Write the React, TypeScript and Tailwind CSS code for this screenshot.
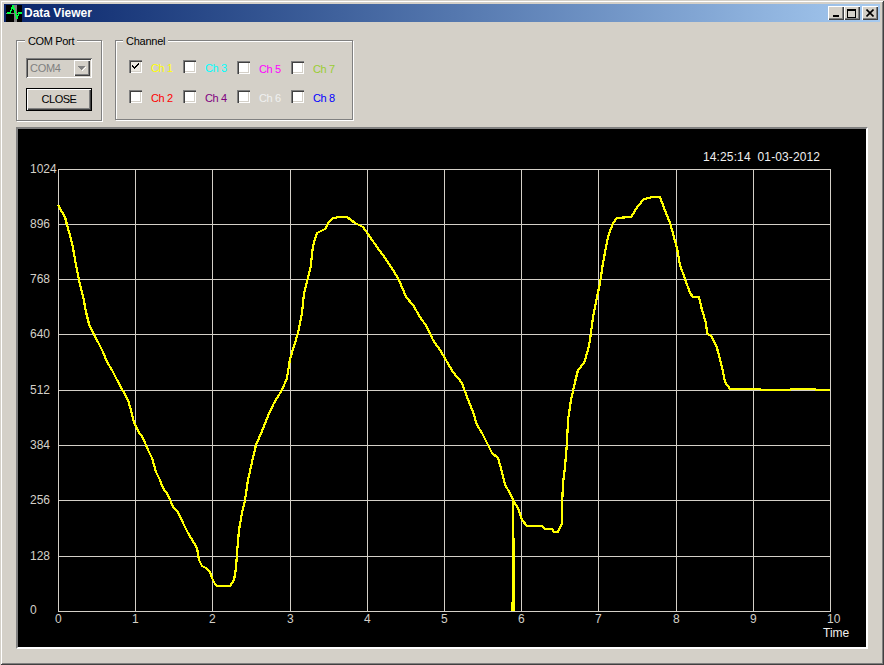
import React from "react";

const curve: [number, number][] = [
  [58,205],[62,212],[65,217],[67,225],[70,235],[73,248],[76,265],[79,280],[83,296],[86,312],[89,324],[93,333],[98,342],[103,352],[107,362],[112,370],[117,380],[123,391],[128,400],[131,410],[134,422],[138,431],[143,438],[148,450],[152,458],[156,472],[160,480],[163,488],[168,495],[173,507],[178,512],[183,523],[188,533],[197,548],[199,560],[202,566],[206,568],[210,572],[212,578],[215,584],[217,586],[230,586],[234,580],[236,568],[237,553],[239,530],[242,513],[245,500],[248,480],[252,462],[256,445],[262,431],[268,416],[274,403],[282,390],[287,378],[290,359],[295,343],[298,333],[302,313],[304,293],[308,278],[311,265],[312,253],[314,242],[317,233],[325,229],[329,222],[333,218],[340,217],[347,217],[355,223],[363,227],[370,237],[377,247],[385,258],[393,270],[399,280],[406,297],[413,305],[420,317],[427,327],[433,340],[440,350],[453,372],[462,383],[467,397],[473,412],[477,425],[482,433],[487,443],[492,453],[498,458],[502,472],[505,485],[510,493],[513,500],[518,508],[522,520],[527,526],[542,526],[545,529],[552,529],[554,532],[558,532],[562,523],[562,507],[563,483],[565,467],[567,443],[568,420],[571,400],[575,382],[578,370],[584,363],[588,350],[590,340],[593,317],[597,297],[600,283],[603,263],[606,247],[608,237],[613,223],[617,218],[631,217],[638,206],[644,199],[653,197],[660,197],[664,208],[670,223],[677,248],[680,265],[690,293],[693,297],[699,297],[702,310],[706,323],[707,333],[712,337],[717,348],[722,367],[725,382],[730,389],[737,389],[760,389],[761,390],[790,390],[791,389],[815,389],[816,390],[830,390],
];

const xs = Array.from({ length: 11 }, (_, i) => Math.round(58 + i * 77.2));
const ys = [169, 224, 279, 334, 390, 445, 500, 556, 611];
const yLabels = ["1024", "896", "768", "640", "512", "384", "256", "128", "0"];

const channels = [
  { name: "Ch 1", color: "text-[#ffff00]", checked: true, cls: "" },
  { name: "Ch 2", color: "text-[#ff0000]", checked: false, cls: "" },
  { name: "Ch 3", color: "text-[#00ffff]", checked: false, cls: "" },
  { name: "Ch 4", color: "text-[#800080]", checked: false, cls: "" },
  { name: "Ch 5", color: "text-[#ff00ff]", checked: false, cls: "mt-px" },
  { name: "Ch 6", color: "text-[#f0f0f0]", checked: false, cls: "" },
  { name: "Ch 7", color: "text-[#9acd32]", checked: false, cls: "mt-px" },
  { name: "Ch 8", color: "text-[#0000ff]", checked: false, cls: "" },
];

function WinButton({ children, cls }: { children: React.ReactNode; cls: string }) {
  return (
    <div className={`w-[16px] h-[14px] bg-[#d4d0c8] shadow-[inset_1px_1px_0_#ffffff,inset_-1px_-1px_0_#404040,inset_-2px_-2px_0_#808080] flex items-center justify-center ${cls}`}>
      {children}
    </div>
  );
}

function Checkbox({ checked }: { checked: boolean }) {
  return (
    <div className={`w-[13px] h-[13px] shrink-0 ${checked ? "bg-[#ece9e2]" : "bg-white"} shadow-[inset_1px_1px_0_#808080,inset_2px_2px_0_#404040,inset_-1px_-1px_0_#ffffff,inset_-2px_-2px_0_#d4d0c8] flex items-center justify-center`}>
      {checked && (
        <svg width="9" height="9" viewBox="0 0 9 9" shapeRendering="crispEdges">
          <path d="M1 3h1v1h1v1h1V4h1V3h1V2h1V1h1v2H7v1H6v1H5v1H4v1H3V6H2V5H1z" fill="#000" />
        </svg>
      )}
    </div>
  );
}

export default function App() {
  const pts = curve.map(([x, y]) => `${x},${y}`).join(" ");
  return (
    <div className="w-[884px] h-[665px] overflow-hidden bg-[#d4d0c8] p-[4px] shadow-[inset_1px_1px_0_#d4d0c8,inset_-1px_-1px_0_#404040,inset_2px_2px_0_#ffffff,inset_-2px_-2px_0_#808080] font-['Liberation_Sans',Arial,sans-serif] text-[11px] text-black">
      <div className="h-[18px] flex items-center bg-gradient-to-r from-[#0a246a] to-[#a6caf0] pl-[2px] pr-[2px]">
        <svg width="16" height="17" viewBox="0 0 16 17" shapeRendering="crispEdges" className="shrink-0">
          <rect width="16" height="17" fill="#000" />
          <path d="M9 0v17" stroke="#808080" strokeWidth="3" />
          <path d="M0 8.5h16" stroke="#808080" strokeWidth="1" />
          <path d="M1 8h3l3-7 4 12 2-5h3" stroke="#00ff40" strokeWidth="1.6" fill="none" />
        </svg>
        <span className="ml-[2px] text-white font-bold text-[12px] leading-none">Data Viewer</span>
        <div className="ml-auto flex items-center">
          <WinButton cls="">
            <svg width="8" height="8" viewBox="0 0 8 8" shapeRendering="crispEdges"><rect x="1" y="6" width="6" height="2" fill="#000" /></svg>
          </WinButton>
          <WinButton cls="">
            <svg width="10" height="9" viewBox="0 0 10 9" shapeRendering="crispEdges"><path d="M0 0h9v9H0zM1 2v6h7V2z" fill="#000" fillRule="evenodd" /></svg>
          </WinButton>
          <WinButton cls="ml-[2px]">
            <svg width="8" height="8" viewBox="0 0 8 8"><path d="M0.5 0.5l7 7M7.5 0.5l-7 7" stroke="#000" strokeWidth="1.6" /></svg>
          </WinButton>
        </div>
      </div>

      <div className="flex items-start mt-[18px] ml-[12px] gap-[13px]">
        <div className="relative w-[86px] h-[81px] border border-[#808080] shadow-[inset_1px_1px_0_#ffffff,1px_1px_0_#ffffff] pt-[17px] pl-[9px]">
          <span className="absolute -top-[6px] left-[8px] px-[3px] bg-[#d4d0c8] leading-[13px] tracking-[-0.35px]">COM Port</span>
          <div className="w-[66px] h-[20px] shadow-[inset_1px_1px_0_#808080,inset_-1px_-1px_0_#ffffff,inset_2px_2px_0_#404040,inset_-2px_-2px_0_#d4d0c8] flex items-center pl-[4px] pr-[2px] justify-between">
            <span className="text-[#808080] text-[11px] tracking-[-0.3px]">COM4</span>
            <div className="w-[16px] h-[16px] bg-[#d4d0c8] shadow-[inset_1px_1px_0_#ffffff,inset_-1px_-1px_0_#404040,inset_-2px_-2px_0_#808080] flex items-center justify-center">
              <svg width="8" height="5" viewBox="0 0 8 5" shapeRendering="crispEdges"><path d="M0 0h7v1H6v1H5v1H4v1H3V3H2V2H1V1H0z" fill="#808080" /><path d="M7 1h1v1H7zM6 2h1v1H6zM5 3h1v1H5zM4 4h1v1H4z" fill="#ffffff" /></svg>
            </div>
          </div>
          <div className="mt-[10px] w-[66px] h-[23px] border border-black bg-[#d4d0c8] shadow-[inset_1px_1px_0_#ffffff,inset_-1px_-1px_0_#404040,inset_-2px_-2px_0_#808080] flex items-center justify-center text-[11px] tracking-[-0.5px]">CLOSE</div>
        </div>

        <div className="relative w-[238px] h-[80px] border border-[#808080] shadow-[inset_1px_1px_0_#ffffff,1px_1px_0_#ffffff] pt-[19px] pl-[13px]">
          <span className="absolute -top-[6px] left-[7px] px-[3px] bg-[#d4d0c8] leading-[13px] tracking-[-0.25px]">Channel</span>
          <div className="grid grid-flow-col grid-rows-2 auto-cols-[54px] gap-y-[16px]">
            {channels.map((c) => (
              <div key={c.name} className={`flex items-center gap-[8px] h-[13px] ${c.cls}`}>
                <Checkbox checked={c.checked} />
                <span className={`${c.color} text-[11px] leading-none tracking-[-0.4px] pt-[3px] pl-px`}>{c.name}</span>
              </div>
            ))}
          </div>
        </div>
      </div>

      <div className="mt-[6px] ml-[12px] w-[852px] h-[522px] border-2 border-t-[#808080] border-l-[#808080] border-r-white border-b-white bg-black">
        <svg width="848" height="518" viewBox="18 129 848 518" className="block">
          <g shapeRendering="crispEdges" stroke="#d4d0c8" strokeWidth="1">
            {xs.map((x) => (
              <line key={x} x1={x + 0.5} y1={169} x2={x + 0.5} y2={612} />
            ))}
            {ys.map((y) => (
              <line key={y} x1={58} y1={y + 0.5} x2={831} y2={y + 0.5} />
            ))}
          </g>
          <polyline points={pts} fill="none" stroke="#ffff00" strokeWidth="2.2" shapeRendering="crispEdges" />
          <g fill="#ffff00" shapeRendering="crispEdges">
            <rect x="512" y="500" width="2" height="38" />
            <rect x="512" y="538" width="3" height="64" />
            <rect x="511" y="602" width="4" height="9" />
          </g>
          <g fill="#d4d0c8" fontSize="12" fontFamily="'Liberation Sans', Arial, sans-serif">
            {yLabels.map((l, i) => (
              <text key={l} x={30} y={ys[i] + (i === 8 ? 3 : 4)}>{l}</text>
            ))}
            {xs.map((x, i) => (
              <text key={x} x={i === 10 ? 827 : x - 3} y={623}>{i}</text>
            ))}
            <text x={823} y={637} fill="#f0f0f0">Time</text>
            <text x={703} y={161} fill="#f0f0f0" letterSpacing="0.12" style={{ whiteSpace: "pre" }}>{"14:25:14  01-03-2012"}</text>
          </g>
        </svg>
      </div>
    </div>
  );
}
